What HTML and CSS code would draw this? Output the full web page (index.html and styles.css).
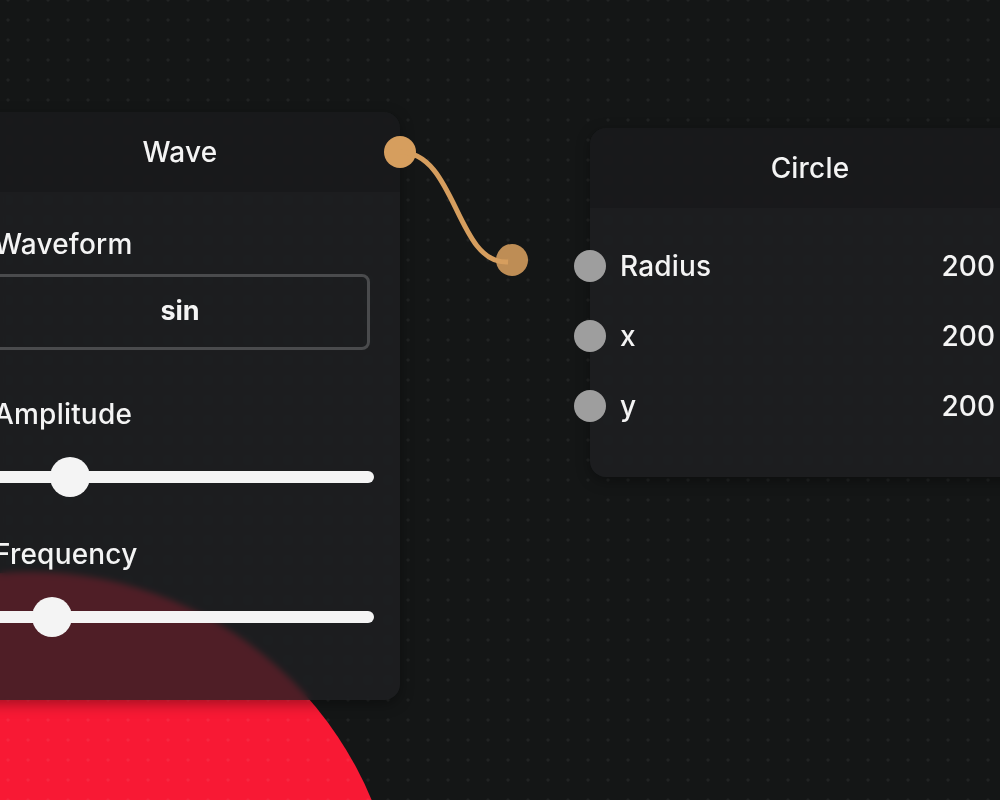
FILE: index.html
```html
<!DOCTYPE html>
<html lang="en">
<head>
<meta charset="utf-8">
<title>Node editor</title>
<link rel="stylesheet" href="styles.css">
</head>
<body>
<main class="canvas">
  <div class="blob"></div>
  <div class="grid"></div>

  <section class="node node-wave">
    <header class="node-head">
      <span class="node-title">Wave</span>
      <span class="port port-out"></span>
    </header>
    <div class="node-body">
      <div class="field field-select">
        <span class="label">Waveform</span>
        <div class="select">sin</div>
      </div>
      <div class="field field-slider">
        <span class="label">Amplitude</span>
        <div class="slider"><span class="thumb" style="left:80px"></span></div>
      </div>
      <div class="field field-slider">
        <span class="label">Frequency</span>
        <div class="slider"><span class="thumb" style="left:62px"></span></div>
      </div>
    </div>
  </section>

  <section class="node node-circle">
    <header class="node-head">
      <span class="node-title">Circle</span>
    </header>
    <div class="node-body rows">
      <div class="row"><span class="port port-in"></span><span class="label">Radius</span><span class="value">200</span></div>
      <div class="row"><span class="port port-in"></span><span class="label">x</span><span class="value">200</span></div>
      <div class="row"><span class="port port-in"></span><span class="label">y</span><span class="value">200</span></div>
    </div>
  </section>

  <svg class="wires" width="1000" height="800" viewBox="0 0 1000 800">
    <path class="wire" d="M400 152 C456 152 456 262 506 262 L508 262"/>
    <circle class="drag-end" cx="512" cy="260" r="16"/>
  </svg>
</main>
</body>
</html>
```

FILE: styles.css
```css
* { box-sizing: border-box; }

html, body {
  margin: 0;
  padding: 0;
  background: #141616;
}

body {
  font-family: "Inter", "Noto Sans", sans-serif;
  color: #f4f4f4;
}

.canvas {
  position: relative;
  width: 1000px;
  height: 800px;
  overflow: hidden;
  background-color: #141616;
}

.grid {
  position: absolute;
  inset: 0;
  background-image: radial-gradient(circle at center, rgba(255, 255, 255, 0.055) 0 1.4px, transparent 1.8px);
  background-size: 20px 20px;
  background-position: -2px -10px;
}

.blob {
  position: absolute;
  left: -340px;
  top: 572px;
  width: 740px;
  height: 740px;
  border-radius: 50%;
  background: #f81934;
}

.node {
  position: absolute;
  width: 440px;
  border-radius: 16px;
  background: rgba(31, 32, 34, 0.78);
  backdrop-filter: blur(3px);
  box-shadow: 0 4px 14px rgba(0, 0, 0, 0.35);
  display: flex;
  flex-direction: column;
}

.node-wave {
  left: -40px;
  top: 112px;
  height: 588px;
}

.node-circle {
  left: 590px;
  top: 128px;
  height: 349px;
}

.node-head {
  position: relative;
  height: 80px;
  display: flex;
  align-items: center;
  justify-content: center;
  background: rgba(0, 0, 0, 0.12);
  border-radius: 16px 16px 0 0;
}

.node-title {
  font-size: 28px;
  font-weight: 500;
  letter-spacing: 0.2px;
}

.port {
  position: absolute;
  width: 32px;
  height: 32px;
  border-radius: 50%;
}

.port-out {
  right: -16px;
  top: 24px;
  background: #d69e5e;
  z-index: 2;
}

.port-in {
  left: -46px;
  top: 50%;
  margin-top: -16px;
  background: #9e9e9e;
}

.node-body {
  display: flex;
  flex-direction: column;
  padding: 36px 30px 0 30px;
}

.label {
  font-size: 28px;
  line-height: 32px;
  font-weight: 500;
  letter-spacing: 0.2px;
}

.field {
  display: flex;
  flex-direction: column;
}

.field-select { gap: 14px; }
.field-slider { gap: 27px; margin-top: 48px; }
.field-slider + .field-slider { margin-top: 41px; }

.field .label { padding-left: 4px; }

.select {
  height: 76px;
  border: 3px solid #4a4b4d;
  border-radius: 8px;
  display: flex;
  align-items: center;
  justify-content: center;
  font-size: 27px;
  font-weight: 700;
  padding-bottom: 3px;
}

.slider {
  position: relative;
  height: 40px;
  margin-right: -4px;
}

.slider::before {
  content: "";
  position: absolute;
  left: 0;
  right: 0;
  top: 14px;
  height: 12px;
  border-radius: 6px;
  background: #f4f4f4;
}

.thumb {
  position: absolute;
  top: 0;
  width: 40px;
  height: 40px;
  margin-left: -20px;
  border-radius: 50%;
  background: #f4f4f4;
}

.rows {
  padding: 23px 35px 0 30px;
}

.row {
  position: relative;
  height: 70px;
  display: flex;
  align-items: center;
  justify-content: space-between;
}

.value {
  font-size: 28px;
  font-weight: 500;
}

.wires {
  position: absolute;
  left: 0;
  top: 0;
  pointer-events: none;
}

.wire {
  fill: none;
  stroke: #d69e5e;
  stroke-width: 5;
  stroke-linecap: butt;
}

.drag-end {
  fill: #d69e5e;
  opacity: 0.88;
}
```
